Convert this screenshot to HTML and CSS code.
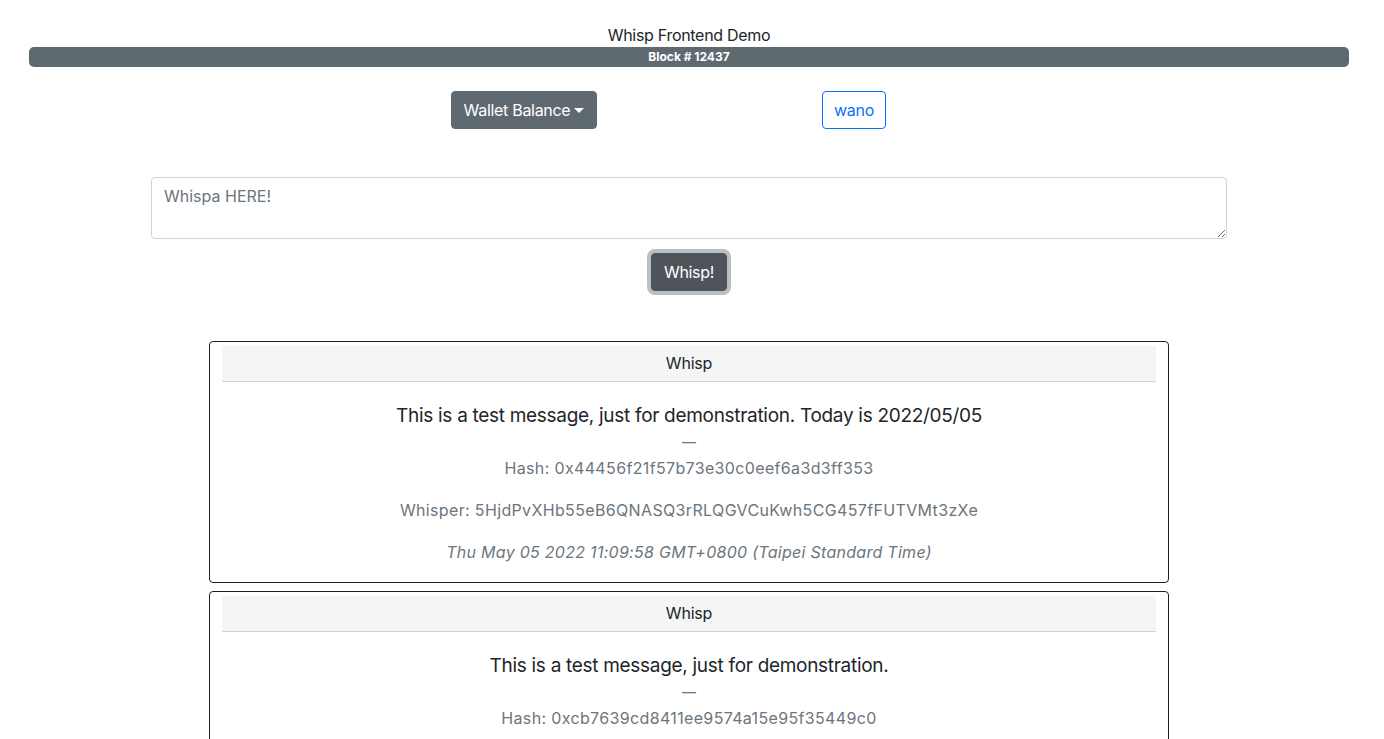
FILE: index.html
```html
<!DOCTYPE html>
<html lang="en">
<head>
<meta charset="utf-8">
<title>Whisp Frontend Demo</title>
<link rel="stylesheet" href="styles.css">
</head>
<body>
<div class="page">
  <header class="top">
    <div class="title">Whisp Frontend Demo</div>
    <div class="progress"><div class="progress-bar">Block # 12437</div></div>
  </header>

  <div class="actions">
    <div class="action-col"><button class="btn btn-secondary">Wallet Balance<span class="caret"></span></button></div>
    <div class="action-col"><button class="btn btn-outline">wano</button></div>
  </div>

  <div class="compose">
    <textarea class="whisp-input" placeholder="Whispa HERE!"></textarea>
    <button class="btn btn-whisp">Whisp!</button>
  </div>

  <div class="feed">
    <div class="card">
      <div class="card-header">Whisp</div>
      <div class="card-body">
        <div class="message">This is a test message, just for demonstration. Today is 2022/05/05</div>
        <div class="dash">—</div>
        <p class="meta">Hash: 0x44456f21f57b73e30c0eef6a3d3ff353</p>
        <p class="meta">Whisper: 5HjdPvXHb55eB6QNASQ3rRLQGVCuKwh5CG457fFUTVMt3zXe</p>
        <p class="meta date">Thu May 05 2022 11:09:58 GMT+0800 (Taipei Standard Time)</p>
      </div>
    </div>
    <div class="card">
      <div class="card-header">Whisp</div>
      <div class="card-body">
        <div class="message">This is a test message, just for demonstration.</div>
        <div class="dash">—</div>
        <p class="meta">Hash: 0xcb7639cd8411ee9574a15e95f35449c0</p>
        <p class="meta">Whisper: 5HjdPvXHb55eB6QNASQ3rRLQGVCuKwh5CG457fFUTVMt3zXe</p>
        <p class="meta date">Thu May 05 2022 11:05:12 GMT+0800 (Taipei Standard Time)</p>
      </div>
    </div>
  </div>
</div>
</body>
</html>
```

FILE: styles.css
```css
* { box-sizing: border-box; }

body {
  margin: 0;
  font-family: Inter, "Liberation Sans", Arial, sans-serif;
  font-size: 16px;
  line-height: 24px;
  color: #212529;
  background: #fff;
}

.page {
  width: 1378px;
  padding-top: 23px;
  padding-bottom: 40px;
}

.top {
  display: flex;
  flex-direction: column;
  align-items: center;
}

.title {
  height: 24px;
  line-height: 24px;
  font-size: 16px;
  letter-spacing: -0.3px;
  text-align: center;
}

.progress {
  width: 1320px;
  height: 20px;
  border-radius: 5px;
  overflow: hidden;
  background: #e9ecef;
}

.progress-bar {
  width: 100%;
  height: 20px;
  background: #5f6a70;
  color: #fff;
  font-size: 12px;
  font-weight: 700;
  line-height: 20px;
  text-align: center;
}

.actions {
  display: flex;
  justify-content: center;
  margin-top: 24px;
}

.action-col {
  width: 330px;
  display: flex;
  justify-content: center;
}

.btn {
  font-family: inherit;
  font-size: 16px;
  line-height: 24px;
  letter-spacing: -0.3px;
  padding: 6px 12px;
  border-radius: 4px;
  border: 1px solid transparent;
  cursor: pointer;
}

.btn-secondary {
  background: #5f6a70;
  border-color: #5f6a70;
  color: #fff;
  display: inline-flex;
  align-items: center;
}

.caret {
  display: inline-block;
  margin-left: 4px;
  width: 0;
  height: 0;
  border-top: 5px solid #fff;
  border-left: 5px solid transparent;
  border-right: 5px solid transparent;
}

.btn-outline {
  background: #fff;
  border-color: #0d6efd;
  color: #0d6efd;
  padding: 6px 11px;
}

.compose {
  display: flex;
  flex-direction: column;
  align-items: center;
  margin-top: 48px;
}

.whisp-input {
  display: block;
  width: 1076px;
  height: 62px;
  padding: 6px 12px;
  font-family: inherit;
  font-size: 16px;
  line-height: 24px;
  color: #212529;
  border: 1px solid #ced4da;
  border-radius: 4px;
  resize: vertical;
  margin: 0;
}

.whisp-input::placeholder {
  color: #6c757d;
}

.btn-whisp {
  margin-top: 14px;
  background: #4f545b;
  border-color: #4f545b;
  color: #fff;
  box-shadow: 0 0 0 4px rgba(130, 138, 145, 0.55);
}

.feed {
  display: flex;
  flex-direction: column;
  align-items: center;
  gap: 8px;
  margin-top: 50px;
}

.card {
  width: 960px;
  border: 1px solid #1f1f1f;
  border-radius: 4px;
  padding: 4px 12px 0;
  text-align: center;
}

.card-header {
  height: 36px;
  line-height: 35px;
  background: #f5f5f5;
  border-bottom: 1px solid #d4d4d4;
  font-size: 16px;
  letter-spacing: -0.2px;
}

.card-body {
  padding-top: 22px;
}

.message {
  font-size: 19px;
  line-height: 24px;
  letter-spacing: -0.3px;
  color: #212529;
}

.dash {
  margin: 2px 0;
  line-height: 24px;
  font-size: 14px;
  color: #6c757d;
}

.meta {
  margin: 0 0 18px;
  line-height: 24px;
  letter-spacing: 0.35px;
  color: #6c757d;
}

.date {
  font-style: italic;
  letter-spacing: 0.28px;
}
```
